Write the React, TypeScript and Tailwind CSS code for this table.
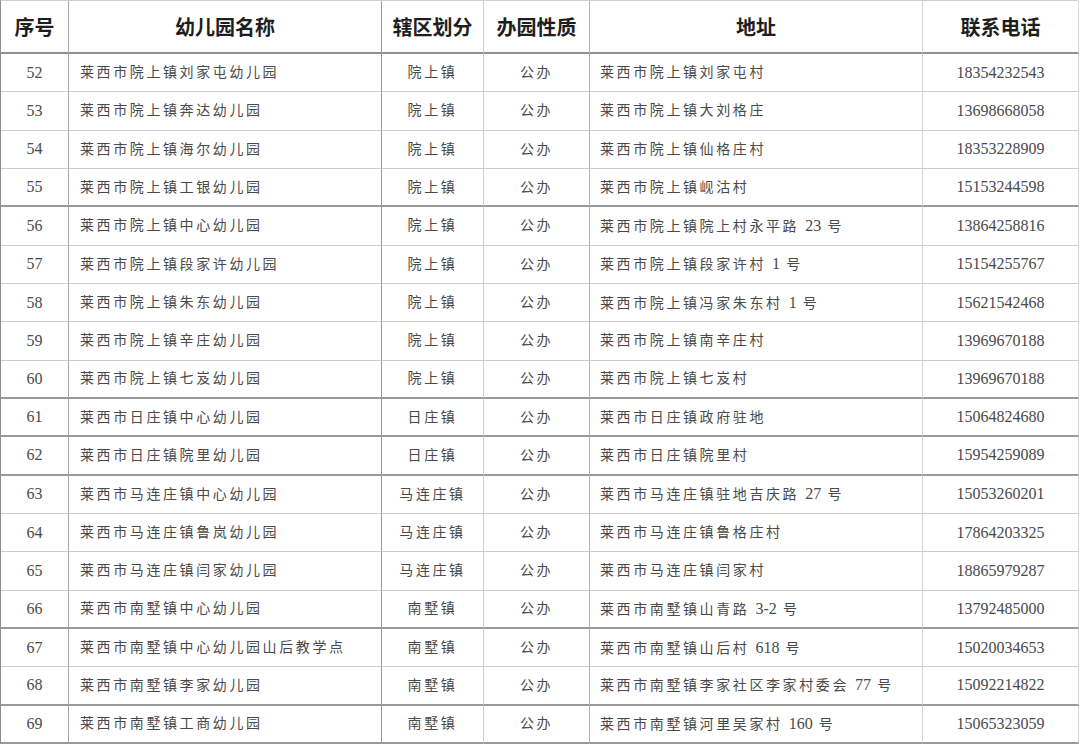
import React from "react";

// 莱西市幼儿园名录（第 52–69 条）
type Row = {
  no: number;
  name: string;
  area: string;
  kind: string;
  addr: string;
  tel: string;
  dark?: boolean; // 下边框较深
};

const rows: Row[] = [
  { no: 52, name: "莱西市院上镇刘家屯幼儿园", area: "院上镇", kind: "公办", addr: "莱西市院上镇刘家屯村", tel: "18354232543" },
  { no: 53, name: "莱西市院上镇奔达幼儿园", area: "院上镇", kind: "公办", addr: "莱西市院上镇大刘格庄", tel: "13698668058" },
  { no: 54, name: "莱西市院上镇海尔幼儿园", area: "院上镇", kind: "公办", addr: "莱西市院上镇仙格庄村", tel: "18353228909" },
  { no: 55, name: "莱西市院上镇工银幼儿园", area: "院上镇", kind: "公办", addr: "莱西市院上镇岘沽村", tel: "15153244598", dark: true },
  { no: 56, name: "莱西市院上镇中心幼儿园", area: "院上镇", kind: "公办", addr: "莱西市院上镇院上村永平路 23 号", tel: "13864258816" },
  { no: 57, name: "莱西市院上镇段家许幼儿园", area: "院上镇", kind: "公办", addr: "莱西市院上镇段家许村 1 号", tel: "15154255767" },
  { no: 58, name: "莱西市院上镇朱东幼儿园", area: "院上镇", kind: "公办", addr: "莱西市院上镇冯家朱东村 1 号", tel: "15621542468" },
  { no: 59, name: "莱西市院上镇辛庄幼儿园", area: "院上镇", kind: "公办", addr: "莱西市院上镇南辛庄村", tel: "13969670188" },
  { no: 60, name: "莱西市院上镇七岌幼儿园", area: "院上镇", kind: "公办", addr: "莱西市院上镇七岌村", tel: "13969670188", dark: true },
  { no: 61, name: "莱西市日庄镇中心幼儿园", area: "日庄镇", kind: "公办", addr: "莱西市日庄镇政府驻地", tel: "15064824680", dark: true },
  { no: 62, name: "莱西市日庄镇院里幼儿园", area: "日庄镇", kind: "公办", addr: "莱西市日庄镇院里村", tel: "15954259089", dark: true },
  { no: 63, name: "莱西市马连庄镇中心幼儿园", area: "马连庄镇", kind: "公办", addr: "莱西市马连庄镇驻地吉庆路 27 号", tel: "15053260201" },
  { no: 64, name: "莱西市马连庄镇鲁岚幼儿园", area: "马连庄镇", kind: "公办", addr: "莱西市马连庄镇鲁格庄村", tel: "17864203325" },
  { no: 65, name: "莱西市马连庄镇闫家幼儿园", area: "马连庄镇", kind: "公办", addr: "莱西市马连庄镇闫家村", tel: "18865979287" },
  { no: 66, name: "莱西市南墅镇中心幼儿园", area: "南墅镇", kind: "公办", addr: "莱西市南墅镇山青路 3-2 号", tel: "13792485000", dark: true },
  { no: 67, name: "莱西市南墅镇中心幼儿园山后教学点", area: "南墅镇", kind: "公办", addr: "莱西市南墅镇山后村 618 号", tel: "15020034653" },
  { no: 68, name: "莱西市南墅镇李家幼儿园", area: "南墅镇", kind: "公办", addr: "莱西市南墅镇李家社区李家村委会 77 号", tel: "15092214822", dark: true },
  { no: 69, name: "莱西市南墅镇工商幼儿园", area: "南墅镇", kind: "公办", addr: "莱西市南墅镇河里吴家村 160 号", tel: "15065323059", dark: true },
];

const headers = ["序号", "幼儿园名称", "辖区划分", "办园性质", "地址", "联系电话"];

// 每一列的右边框颜色（扫描件里深浅不一）
const colRight = [
  "border-r-[#a8a8a8]",
  "border-r-[#9a9a9a]",
  "border-r-[#cfcfcf]",
  "border-r-[#b4b4b4]",
  "border-r-[#d4d4d4]",
  "border-r-[#d8d8d8]",
];

const body = "font-['Liberation_Serif','Noto_Sans_CJK_SC',serif] text-[14px] text-[#4a4a4a]";

// 地址里的数字不加字距，汉字照旧拉开
function Spaced({ text }: { text: string }) {
  const parts = text.split(/([0-9-]+)/);
  return (
    <span className="whitespace-pre">
      {parts.map((p, i) =>
        /^[0-9-]+$/.test(p) ? (
          <span key={i} className="text-[16px] tracking-normal">
            {p}
          </span>
        ) : (
          p
        )
      )}
    </span>
  );
}

export default function App() {
  return (
    <div className="min-h-[753px] w-[1080px] bg-white">
      <div className="grid h-[744px] w-[1078px] grid-cols-[68px_313px_102px_106px_333px_156px] grid-rows-[53px_repeat(18,minmax(0,1fr))] border-t border-l border-t-[#cfcfcf] border-l-[#8e8e8e]">
        {headers.map((h, i) => (
          <div
            key={h}
            className={`flex items-center justify-center border-r border-b-2 border-b-[#8f8f8f] ${colRight[i]} font-['Noto_Sans_CJK_SC',sans-serif] text-[20px] font-bold text-[#1e1e1e]`}
          >
            {h}
          </div>
        ))}
        {rows.map((r) => {
          const bottom = r.dark ? "border-b-2 border-b-[#9a9a9a]" : "border-b border-b-[#cdcdcd]";
          return (
            <React.Fragment key={r.no}>
              <div className={`flex items-center justify-center border-r ${colRight[0]} ${bottom} ${body} text-[16px]`}>
                {r.no}
              </div>
              <div className={`flex items-center border-r pl-[11px] tracking-[2.6px] ${colRight[1]} ${bottom} ${body}`}>
                {r.name}
              </div>
              <div className={`flex items-center justify-center border-r tracking-[2.6px] ${colRight[2]} ${bottom} ${body}`}>
                {r.area}
              </div>
              <div className={`flex items-center justify-center border-r tracking-[2.6px] ${colRight[3]} ${bottom} ${body}`}>
                {r.kind}
              </div>
              <div className={`flex items-center border-r pl-[10px] tracking-[2.6px] ${colRight[4]} ${bottom} ${body}`}>
                <Spaced text={r.addr} />
              </div>
              <div className={`flex items-center justify-center border-r ${colRight[5]} ${bottom} ${body} text-[16px]`}>
                {r.tel}
              </div>
            </React.Fragment>
          );
        })}
      </div>
    </div>
  );
}
